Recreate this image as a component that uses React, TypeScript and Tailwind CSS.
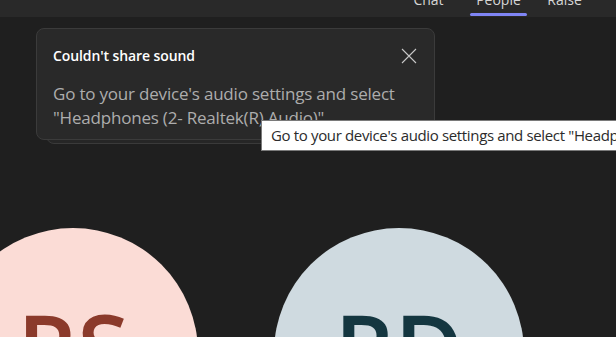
const tabs = [
  { label: "Chat", active: false, className: "w-[57px]" },
  { label: "People", active: true, className: "w-[57px] ml-[13px]" },
  { label: "Raise", active: false, className: "w-[57px] ml-[9px]" },
];

const avatars = [
  { initials: "RS", bg: "bg-[#fbdcd6]", fg: "text-[#8b3a2b]" },
  { initials: "RD", bg: "bg-[#cfdae0]", fg: "text-[#143640]" },
];

function CloseIcon() {
  return (
    <svg width="16" height="16" viewBox="0 0 16 16" fill="none">
      <path d="M1 1L15 15M15 1L1 15" stroke="#c8c8c8" strokeWidth="1.1" />
    </svg>
  );
}

export default function App() {
  return (
    <div className="relative h-[337px] w-[616px] overflow-hidden bg-[#1f1f1f] font-['Open_Sans',sans-serif]">
      {/* top bar */}
      <div className="flex h-[17px] bg-[#292929] pl-[400px]">
        {tabs.map((tab) => (
          <div key={tab.label} className={`flex flex-col items-center ${tab.className}`}>
            <span className="mt-[-10px] text-[14px] leading-[20px] text-[#d6d6d6]">{tab.label}</span>
            <div className={`mt-[3px] h-[3px] w-full rounded-sm ${tab.active ? "bg-[#7f85f5]" : ""}`} />
          </div>
        ))}
      </div>

      {/* participants */}
      <div className="ml-[-52px] mt-[211px] flex gap-[76px]">
        {avatars.map((a) => (
          <div
            key={a.initials}
            className={`flex h-[250px] w-[250px] shrink-0 justify-center rounded-full pt-[72px] ${a.bg}`}
          >
            <span className={`text-[94px] font-semibold leading-none ${a.fg}`}>{a.initials}</span>
          </div>
        ))}
      </div>

      {/* toast */}
      <div className="absolute left-[46px] top-[34px] h-[110px] w-[379px] rounded-lg border border-[#3a3a3a] bg-[#262626]" />
      <div className="absolute left-[36px] top-[28px] h-[112px] w-[399px] rounded-lg border border-[#3b3b3b] bg-[#292929] pl-[16px] pr-[17px] pt-[17px]">
        <div className="flex items-center justify-between">
          <span className="text-[14px] font-semibold leading-[20px] tracking-[-0.1px] text-white">Couldn't share sound</span>
          <CloseIcon />
        </div>
        <p className="mt-[16px] w-[362px] text-[17px] leading-[24px] tracking-[-0.2px] text-[#adadad]">
          Go to your device's audio settings and select "Headphones (2- Realtek(R) Audio)"
        </p>
      </div>

      {/* tooltip */}
      <div className="absolute left-[261px] top-[120px] h-[31px] whitespace-nowrap border border-[#7a7a7a] bg-white px-[9px] text-[15px] leading-[29px] tracking-[-0.35px] text-[#2b2b2b]">
        Go to your device's audio settings and select "Headphones (2- Realtek(R) Audio)"
      </div>
    </div>
  );
}
